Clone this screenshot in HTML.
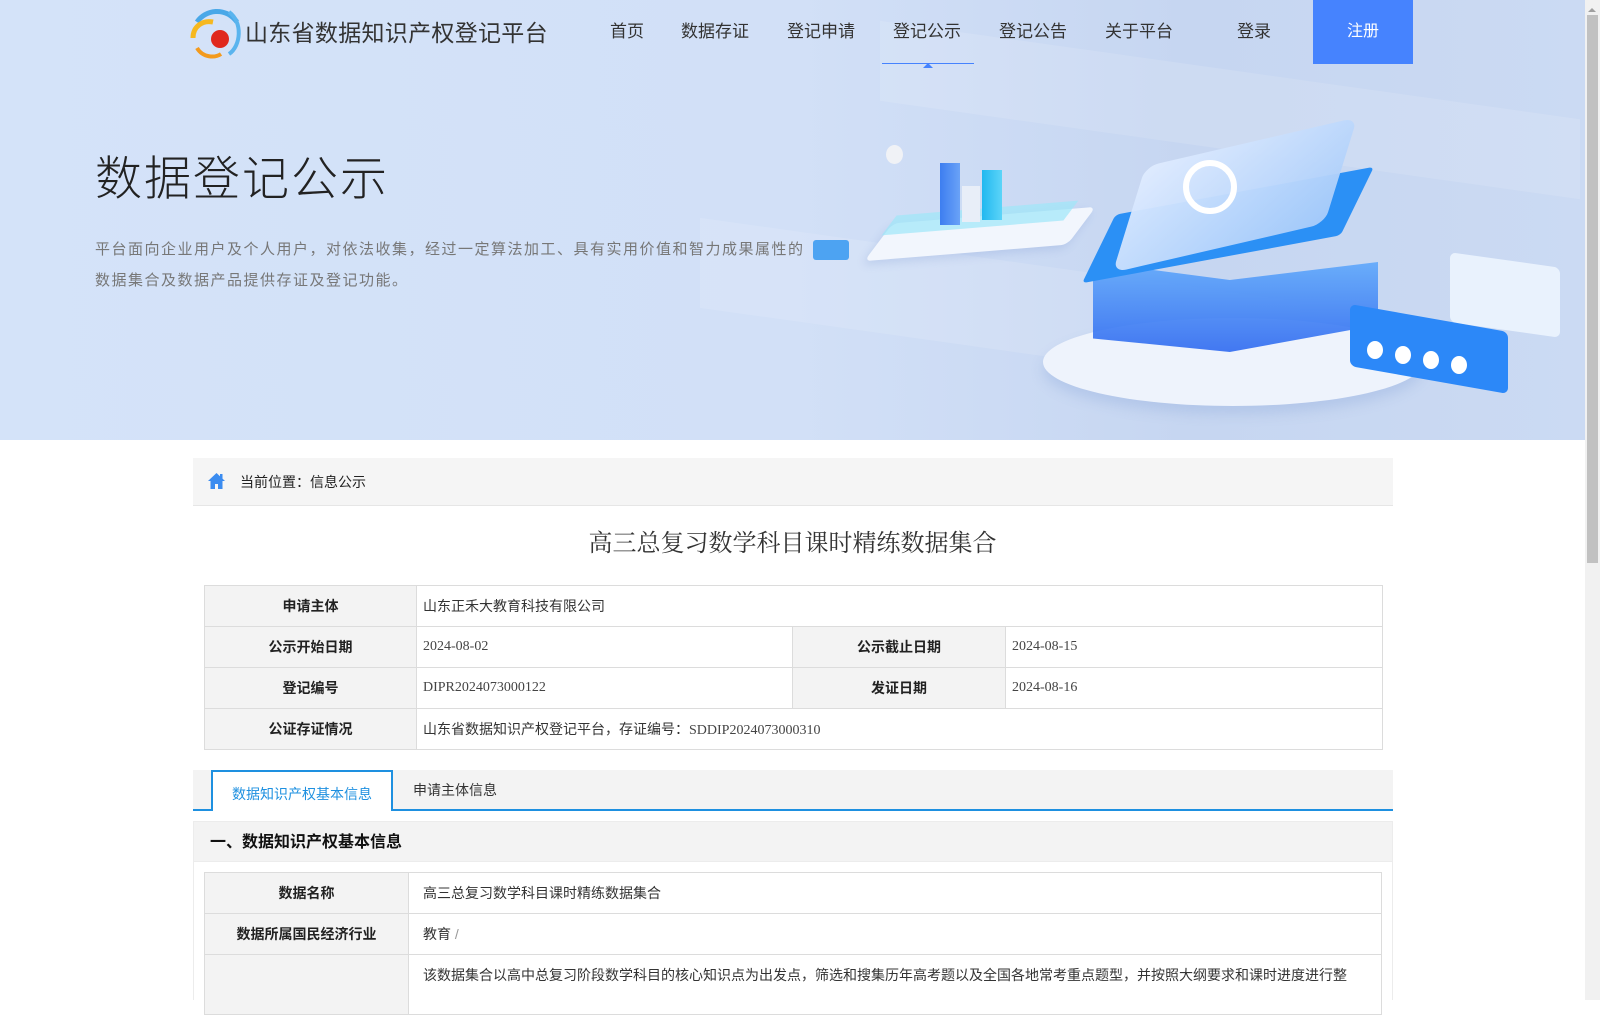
<!DOCTYPE html>
<html><head><meta charset="utf-8">
<style>
*{margin:0;padding:0;box-sizing:border-box}
body{width:1600px;height:1000px;overflow:hidden;font-family:"Liberation Sans","Noto Sans CJK SC",sans-serif;background:#fff;position:relative;color:#333}
.hero{position:absolute;left:0;top:0;width:1585px;height:440px;background:linear-gradient(90deg,#d4e3f9 0%,#d2e0f7 50%,#c6d6f1 75%,#cbdaf3 100%);overflow:hidden}
.scroll{position:absolute;left:1585px;top:0;width:15px;height:1000px;background:#f1f1f1}
.thumb{position:absolute;left:1587px;top:15px;width:11px;height:548px;background:#c1c1c1}
.nav{position:absolute;top:0;font-size:17px;color:#333;line-height:64px}
.ttl{position:absolute;left:245px;top:14px;font-size:23px;color:#333;letter-spacing:0.3px}
.reg{position:absolute;left:1313px;top:0;width:100px;height:64px;background:#4683fe;color:#fff;font-size:16px;text-align:center;line-height:64px}
.h1{position:absolute;left:95px;top:140px;font-size:47px;color:#222;font-weight:300;font-family:"Noto Sans CJK SC",sans-serif;letter-spacing:2px}
.desc{position:absolute;left:95px;top:235px;font-size:15px;color:#777;line-height:30.5px;width:722px;letter-spacing:1.5px}
.bc{position:absolute;left:193px;top:458px;width:1200px;height:48px;background:#f5f5f5;border-bottom:1px solid #e6e6e6;font-size:14px;line-height:48px;padding-left:47px;color:#222}
.title{position:absolute;left:0;width:1585px;top:523px;text-align:center;font-size:24px;color:#333;font-family:"Noto Serif CJK SC","Noto Sans CJK SC",serif}
table{border-collapse:collapse;position:absolute;font-size:14px}
td{border:1px solid #dcdcdc;height:41px;padding:0 6px;color:#333}
td.l{background:#f3f3f3;text-align:center;font-weight:bold;color:#222}
.num{font-family:"Liberation Serif",serif;color:#444}
.tabs{position:absolute;left:193px;top:770px;width:1200px;height:41px;background:#f3f3f3;border-bottom:2px solid #1e90e0}
.tab1{position:absolute;left:18px;top:0;width:182px;height:41px;background:#fff;border:2px solid #1e90e0;border-bottom:none;color:#1e90e0;font-size:14px;text-align:center;line-height:44px}
.tab2{position:absolute;left:220px;top:0;font-size:14px;line-height:40px;color:#333}
.sec{position:absolute;left:193px;top:821px;width:1200px;height:41px;background:#f3f3f3;font-size:16px;font-weight:bold;line-height:41px;padding-left:16px;color:#111;border:1px solid #ececec}
</style></head><body>
<div class="hero">
  <div style="position:absolute;left:880px;top:70px;width:700px;height:80px;background:rgba(255,255,255,.12);transform:skewY(8deg)"></div>
  <div style="position:absolute;left:700px;top:260px;width:600px;height:90px;background:rgba(255,255,255,.12);transform:skewY(8deg)"></div>
  <div style="position:absolute;left:885px;top:215px;width:190px;height:38px;background:#f2f6fd;border-radius:6px;transform:skewX(-40deg) rotate(-5deg);box-shadow:0 4px 8px rgba(100,130,200,.2)"></div>
  <div style="position:absolute;left:895px;top:208px;width:170px;height:20px;background:#9ee7f8;opacity:.7;transform:skewX(-40deg) rotate(-5deg)"></div>
  <div style="position:absolute;left:940px;top:163px;width:20px;height:62px;background:linear-gradient(90deg,#3d7ef0,#6aa2f7)"></div>
  <div style="position:absolute;left:982px;top:170px;width:20px;height:50px;background:linear-gradient(90deg,#21b8f0,#5cd4f8)"></div>
  <div style="position:absolute;left:962px;top:186px;width:18px;height:36px;background:#e8eef8"></div>
  <div style="position:absolute;left:886px;top:145px;width:17px;height:19px;border-radius:50%;background:#f0f2f6"></div>
  <div style="position:absolute;left:813px;top:240px;width:36px;height:20px;background:#4da3f2;border-radius:3px"></div>
  <div style="position:absolute;left:1043px;top:318px;width:380px;height:88px;border-radius:50%;background:#eef3fc;box-shadow:0 8px 12px rgba(120,150,210,.25)"></div>
  <div style="position:absolute;left:1093px;top:262px;width:285px;height:90px;background:linear-gradient(180deg,#5fa8fb,#2f6af0);opacity:.9;clip-path:polygon(0 0,48% 20%,100% 0,100% 70%,48% 100%,0 85%)"></div>
  <div style="position:absolute;left:1113px;top:190px;width:230px;height:70px;background:#2b90f5;transform:skewX(-35deg) rotate(-12deg);border-radius:4px"></div>
  <div style="position:absolute;left:1140px;top:140px;width:190px;height:110px;background:linear-gradient(135deg,#e0ecff,#a8ccfa);transform:skewX(-30deg) rotate(-15deg);border-radius:12px;opacity:.95"></div>
  <div style="position:absolute;left:1183px;top:160px;width:54px;height:54px;border:6px solid #fff;border-radius:50%"></div>
  <div style="position:absolute;left:1450px;top:260px;width:110px;height:70px;background:#e9f2fd;border-radius:6px;transform:skewY(8deg)"></div>
  <div style="position:absolute;left:1350px;top:318px;width:158px;height:62px;background:#2c88f8;border-radius:6px;transform:skewY(10deg)"></div>
  <div style="position:absolute;left:1367px;top:341px;width:16px;height:18px;border-radius:50%;background:#fff"></div>
  <div style="position:absolute;left:1395px;top:346px;width:16px;height:18px;border-radius:50%;background:#fff"></div>
  <div style="position:absolute;left:1423px;top:351px;width:16px;height:18px;border-radius:50%;background:#fff"></div>
  <div style="position:absolute;left:1451px;top:356px;width:16px;height:18px;border-radius:50%;background:#fff"></div>
</div>
<svg style="position:absolute;left:189px;top:8px" width="54" height="52" viewBox="0 0 54 52">
  <path d="M8 14 C16 2 36 -2 48 14" stroke="#4aa8e8" stroke-width="5" fill="none"/>
  <path d="M40 4 C54 14 52 38 40 46" stroke="#5ab4ee" stroke-width="4" fill="none"/>
  <path d="M4 30 C4 18 14 12 24 14" stroke="#f6b81f" stroke-width="5" fill="none"/>
  <path d="M8 40 C14 50 26 50 32 46" stroke="#f39a1d" stroke-width="4" fill="none"/>
  <circle cx="31" cy="31" r="9" fill="#e0281d"/>
</svg>
<div class="ttl">山东省数据知识产权登记平台</div>
<div class="nav" style="left:610px">首页</div>
<div class="nav" style="left:681px">数据存证</div>
<div class="nav" style="left:787px">登记申请</div>
<div class="nav" style="left:893px">登记公示</div>
<div style="position:absolute;left:882px;top:63px;width:92px;height:1px;background:#4683fe"></div>
<div style="position:absolute;left:923px;top:58px;width:0;height:0;border:5px solid transparent;border-bottom-color:#4683fe"></div>
<div class="nav" style="left:999px">登记公告</div>
<div class="nav" style="left:1105px">关于平台</div>
<div class="nav" style="left:1237px">登录</div>
<div class="reg">注册</div>
<div class="h1">数据登记公示</div>
<div class="desc">平台面向企业用户及个人用户，对依法收集，经过一定算法加工、具有实用价值和智力成果属性的数据集合及数据产品提供存证及登记功能。</div>

<div class="bc">当前位置：信息公示</div>
<svg style="position:absolute;left:207px;top:472px" width="19" height="18" viewBox="0 0 19 18"><path d="M9.5 1 L1 9 L3.5 9 L3.5 17 L8 17 L8 12 L11 12 L11 17 L15.5 17 L15.5 9 L18 9 Z" fill="#3b8cf0"/><rect x="13" y="2" width="2.5" height="5" fill="#3b8cf0"/></svg>
<div class="title">高三总复习数学科目课时精练数据集合</div>

<table style="left:204px;top:585px;width:1179px">
<tr><td class="l" style="width:212px">申请主体</td><td colspan="3">山东正禾大教育科技有限公司</td></tr>
<tr><td class="l">公示开始日期</td><td class="num" style="width:376px">2024-08-02</td><td class="l" style="width:213px">公示截止日期</td><td class="num">2024-08-15</td></tr>
<tr><td class="l">登记编号</td><td class="num">DIPR2024073000122</td><td class="l">发证日期</td><td class="num">2024-08-16</td></tr>
<tr><td class="l">公证存证情况</td><td colspan="3">山东省数据知识产权登记平台，存证编号：<span class="num">SDDIP2024073000310</span></td></tr>
</table>

<div class="tabs"><div class="tab1">数据知识产权基本信息</div><div class="tab2">申请主体信息</div></div>
<div class="sec">一、数据知识产权基本信息</div>

<table style="left:204px;top:872px;width:1178px">
<tr><td class="l" style="width:204px">数据名称</td><td style="padding-left:14px">高三总复习数学科目课时精练数据集合</td></tr>
<tr><td class="l">数据所属国民经济行业</td><td style="padding-left:14px">教育 <span style="color:#999">/</span></td></tr>
<tr><td class="l" style="height:60px"></td><td style="padding-left:14px;vertical-align:top;padding-top:10px">该数据集合以高中总复习阶段数学科目的核心知识点为出发点，筛选和搜集历年高考题以及全国各地常考重点题型，并按照大纲要求和课时进度进行整</td></tr>
</table>
<div style="position:absolute;left:193px;top:862px;width:1px;height:138px;background:#ececec"></div>
<div style="position:absolute;left:1392px;top:862px;width:1px;height:138px;background:#ececec"></div>

<div class="scroll"></div><div class="thumb"></div>
<div style="position:absolute;left:1588px;top:4px;width:0;height:0;border:4px solid transparent;border-bottom-color:#a0a0a0"></div>
</body></html>
